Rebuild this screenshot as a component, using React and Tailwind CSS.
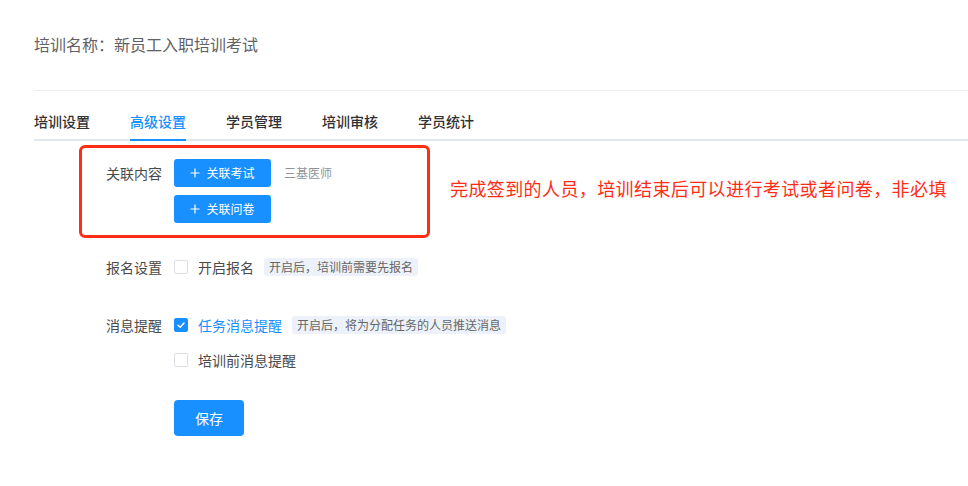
import React, { useState } from 'react';

const font = { fontFamily: '"PingFang SC", "Noto Sans CJK SC", sans-serif' };

const tabs = ['培训设置', '高级设置', '学员管理', '培训审核', '学员统计'];

const Checkbox = ({ checked }) => (
  <span
    className={`w-[14px] h-[14px] rounded-[2px] border flex items-center justify-center shrink-0 ${
      checked ? 'bg-[#1890ff] border-[#1890ff]' : 'bg-white border-[#dcdfe6]'
    }`}
  >
    {checked && (
      <svg width="10" height="10" viewBox="0 0 10 10" fill="none">
        <path d="M2 5.2 L4.2 7.2 L8 3" stroke="white" strokeWidth="1.4" strokeLinecap="round" strokeLinejoin="round" />
      </svg>
    )}
  </span>
);

const Plus = () => (
  <svg width="10" height="10" viewBox="0 0 10 10" className="mr-[6px]">
    <path d="M5 0.5 V9.5 M0.5 5 H9.5" stroke="white" strokeWidth="1.2" />
  </svg>
);

const App = () => {
  const [active, setActive] = useState(1);
  const [signup, setSignup] = useState(false);
  const [taskMsg, setTaskMsg] = useState(true);
  const [preMsg, setPreMsg] = useState(false);

  return (
    <div className="w-[968px] h-[486px] bg-white pl-[34px] overflow-hidden" style={font}>
      {/* Title */}
      <div className="pt-[32px] h-[91px] text-[16px] leading-[24px] text-[#606266] border-b border-[#eeeeee]">
        培训名称：新员工入职培训考试
      </div>

      {/* Tabs */}
      <div className="mt-[10px] flex gap-[40px] border-b-2 border-[#e4e7ed]">
        {tabs.map((t, i) => (
          <button
            key={t}
            onClick={() => setActive(i)}
            className={`h-[40px] -mb-[2px] pt-[2px] text-[14px] font-medium border-b-2 ${
              active === i ? 'text-[#1890ff] border-[#1890ff]' : 'text-[#303133] border-transparent'
            }`}
          >
            {t}
          </button>
        ))}
      </div>

      <div className="pl-[45px] pt-[4px]">
        {/* Related content, highlighted */}
        <div className="flex items-center">
          <div className="w-[351px] h-[93px] border-[3px] border-[#ff2d16] rounded-[6px] flex pt-[11px]">
            <div className="w-[80px] text-right text-[14px] text-[#4a4a4a] leading-[28px]">关联内容</div>
            <div className="ml-[12px] flex flex-col gap-[8px]">
              <div className="flex items-center">
                <button className="w-[97px] h-[28px] rounded-[3px] bg-[#1890ff] text-white text-[12px] flex items-center justify-center">
                  <Plus />
                  关联考试
                </button>
                <span className="ml-[13px] text-[12px] text-[#909399]">三基医师</span>
              </div>
              <button className="w-[97px] h-[28px] rounded-[3px] bg-[#1890ff] text-white text-[12px] flex items-center justify-center">
                <Plus />
                关联问卷
              </button>
            </div>
          </div>
          <div className="ml-[20px] -mt-[7px] text-[18px] tracking-[0.4px] text-[#ff2d16]">
            完成签到的人员，培训结束后可以进行考试或者问卷，非必填
          </div>
        </div>

        {/* Signup */}
        <div className="mt-[13px] h-[32px] flex items-center pl-[3px]">
          <div className="w-[80px] text-right text-[14px] text-[#4a4a4a]">报名设置</div>
          <label className="ml-[12px] flex items-center cursor-pointer" onClick={() => setSignup(!signup)}>
            <Checkbox checked={signup} />
            <span className={`ml-[10px] text-[14px] ${signup ? 'text-[#1890ff]' : 'text-[#4a4a4a]'}`}>开启报名</span>
          </label>
          <span className="ml-[10px] h-[18px] px-[5px] rounded-[3px] bg-[#edf2fa] text-[12px] leading-[18px] text-[#666]">
            开启后，培训前需要先报名
          </span>
        </div>

        {/* Messages */}
        <div className="mt-[26px] h-[32px] flex items-center pl-[3px]">
          <div className="w-[80px] text-right text-[14px] text-[#4a4a4a]">消息提醒</div>
          <label className="ml-[12px] flex items-center cursor-pointer" onClick={() => setTaskMsg(!taskMsg)}>
            <Checkbox checked={taskMsg} />
            <span className={`ml-[10px] text-[14px] ${taskMsg ? 'text-[#1890ff]' : 'text-[#4a4a4a]'}`}>任务消息提醒</span>
          </label>
          <span className="ml-[10px] h-[18px] px-[5px] rounded-[3px] bg-[#edf2fa] text-[12px] leading-[18px] text-[#666]">
            开启后，将为分配任务的人员推送消息
          </span>
        </div>
        <div className="mt-[3px] h-[32px] flex items-center pl-[95px]">
          <label className="flex items-center cursor-pointer" onClick={() => setPreMsg(!preMsg)}>
            <Checkbox checked={preMsg} />
            <span className={`ml-[10px] text-[14px] ${preMsg ? 'text-[#1890ff]' : 'text-[#4a4a4a]'}`}>培训前消息提醒</span>
          </label>
        </div>

        <div className="mt-[24px] pl-[95px]">
          <button className="w-[70px] h-[36px] rounded-[4px] bg-[#1890ff] text-white text-[14px]">保存</button>
        </div>
      </div>
    </div>
  );
};

export default App;
